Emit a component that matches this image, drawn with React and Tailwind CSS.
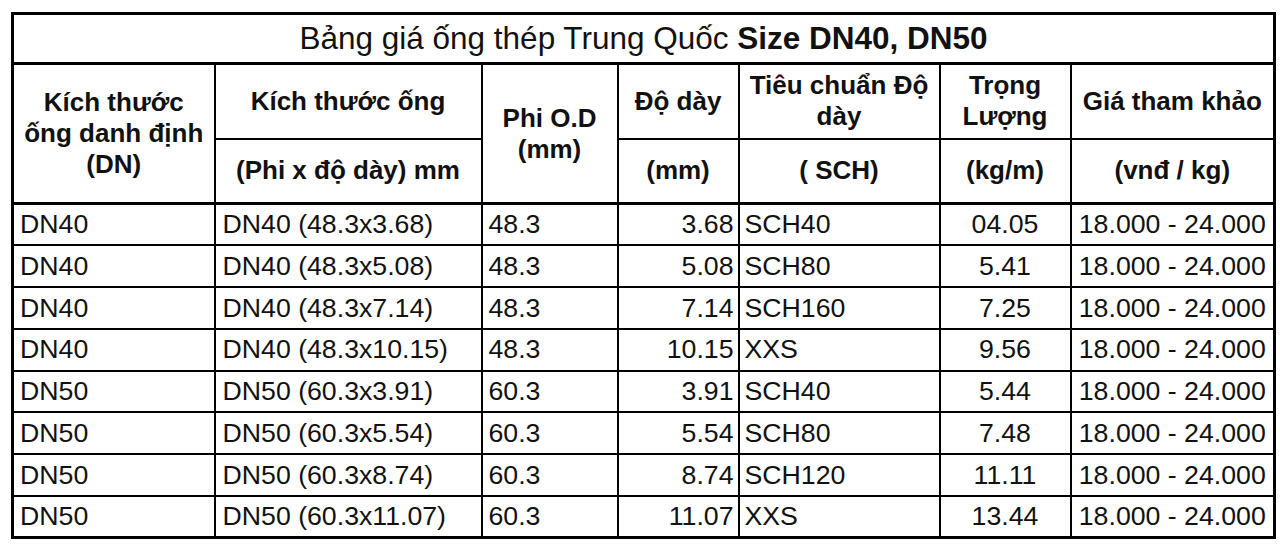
import React from "react";

const rows = [
  ["DN40", "DN40 (48.3x3.68)", "48.3", "3.68", "SCH40", "04.05"],
  ["DN40", "DN40 (48.3x5.08)", "48.3", "5.08", "SCH80", "5.41"],
  ["DN40", "DN40 (48.3x7.14)", "48.3", "7.14", "SCH160", "7.25"],
  ["DN40", "DN40 (48.3x10.15)", "48.3", "10.15", "XXS", "9.56"],
  ["DN50", "DN50 (60.3x3.91)", "60.3", "3.91", "SCH40", "5.44"],
  ["DN50", "DN50 (60.3x5.54)", "60.3", "5.54", "SCH80", "7.48"],
  ["DN50", "DN50 (60.3x8.74)", "60.3", "8.74", "SCH120", "11.11"],
  ["DN50", "DN50 (60.3x11.07)", "60.3", "11.07", "XXS", "13.44"],
];

const th = "border-2 border-black font-bold text-[26px] leading-[31px] text-center align-middle px-1";
const td = "border-2 border-black text-[26.7px] leading-none align-middle";

export default function App() {
  return (
    <div className="w-[1280px] h-[550px] bg-white pt-[12px] pl-[11px] font-['Liberation_Sans',Arial,sans-serif] text-[#111]">
      <table className="table-fixed border-collapse border-[3px] border-black w-[1262px]">
        <colgroup>
          <col className="w-[202px]" />
          <col className="w-[267px]" />
          <col className="w-[136px]" />
          <col className="w-[121px]" />
          <col className="w-[201px]" />
          <col className="w-[131px]" />
          <col className="w-[204px]" />
        </colgroup>
        <thead>
          <tr className="h-[50px]">
            <th colSpan={7} className="border-b-[3px] border-black text-[31.5px] leading-none font-normal text-center align-middle">
              Bảng giá ống thép Trung Quốc <span className="font-bold">Size DN40, DN50</span>
            </th>
          </tr>
          <tr className="h-[75px]">
            <th rowSpan={2} className={th}>
              Kích thước
              <br />
              ống danh định (DN)
            </th>
            <th className={th}>Kích thước ống</th>
            <th rowSpan={2} className={th}>
              Phi O.D
              <br />
              (mm)
            </th>
            <th className={th}>Độ dày</th>
            <th className={th}>Tiêu chuẩn Độ dày</th>
            <th className={th}>Trọng Lượng</th>
            <th className={th}>Giá tham khảo</th>
          </tr>
          <tr className="h-[65px] border-b-[3px] border-black">
            <th className={th}>(Phi x độ dày) mm</th>
            <th className={th}>(mm)</th>
            <th className={th}>( SCH)</th>
            <th className={th}>(kg/m)</th>
            <th className={th}>(vnđ / kg)</th>
          </tr>
        </thead>
        <tbody>
          {rows.map((r, i) => (
            <tr key={i} className="h-[41.75px]">
              <td className={`${td} pl-[6px]`}>{r[0]}</td>
              <td className={`${td} pl-[7px]`}>{r[1]}</td>
              <td className={`${td} pl-[6px]`}>{r[2]}</td>
              <td className={`${td} text-right pr-[4px]`}>{r[3]}</td>
              <td className={`${td} pl-[5px]`}>{r[4]}</td>
              <td className={`${td} text-center`}>{r[5]}</td>
              <td className={`${td} text-center`}>18.000 - 24.000</td>
            </tr>
          ))}
        </tbody>
      </table>
    </div>
  );
}
